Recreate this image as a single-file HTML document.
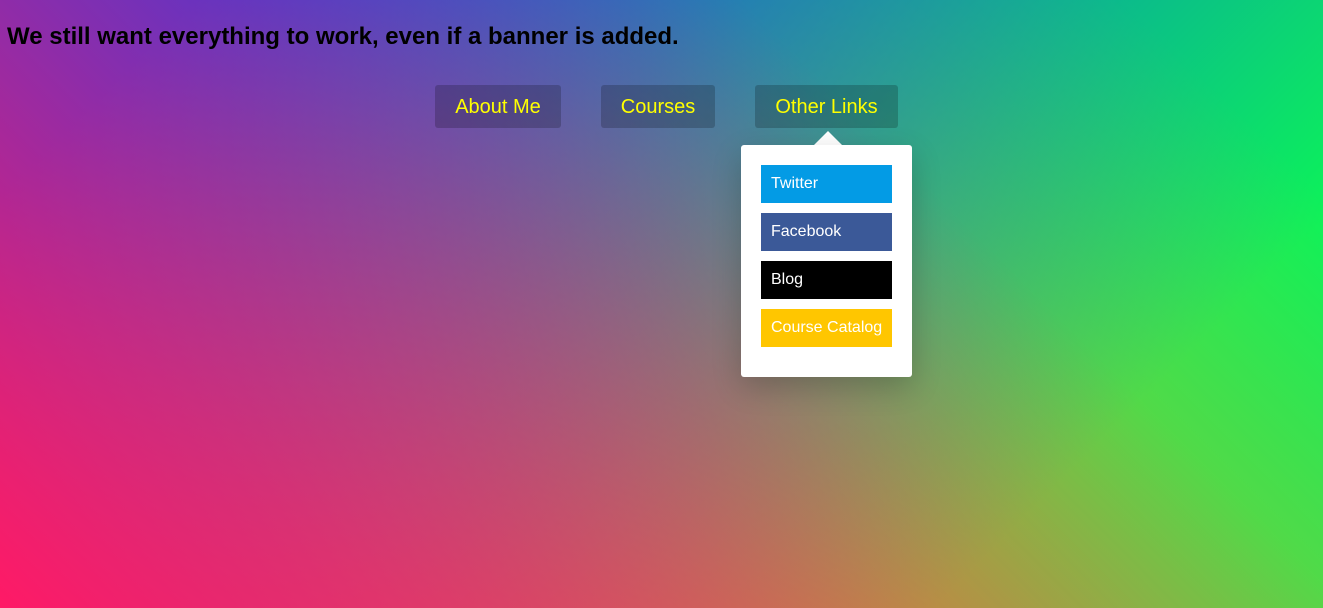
<!DOCTYPE html>
<html><head><style>
html,body{margin:0;height:100%;}
body{width:1323px;height:608px;overflow:hidden;font-family:"Liberation Sans",sans-serif;position:relative;
background:
linear-gradient(45deg,hsla(340,100%,55%,1) 0%,hsla(340,100%,55%,0) 70%),
linear-gradient(135deg,hsla(225,95%,50%,1) 10%,hsla(225,95%,50%,0) 80%),
linear-gradient(225deg,hsla(140,90%,50%,1) 10%,hsla(140,90%,50%,0) 80%),
linear-gradient(315deg,hsla(35,95%,55%,1) 100%,hsla(35,95%,55%,0) 70%);}
h2{position:absolute;left:7px;top:23px;margin:0;font-size:24px;font-weight:bold;color:#000;}
.btn{position:absolute;top:85px;height:43px;line-height:44px;background:rgba(0,0,0,.2);color:#ff0;font-size:20px;text-align:center;border-radius:3px;}
.dd{position:absolute;left:741px;top:145px;width:171px;height:232px;background:#fff;border-radius:3px;box-shadow:0 10px 30px rgba(0,0,0,.2);}
.arrow{position:absolute;left:814px;top:131px;width:0;height:0;border:14px solid transparent;border-bottom-color:#fff;border-top:0;}
.it{position:absolute;left:20px;width:121px;height:38px;line-height:38px;padding-left:10px;color:#fff;font-size:16px;}
</style></head><body>
<h2>We still want everything to work, even if a banner is added.</h2>
<div class="btn" style="left:435px;width:126px">About Me</div>
<div class="btn" style="left:601px;width:114px">Courses</div>
<div class="btn" style="left:755px;width:143px">Other Links</div>
<div class="arrow"></div>
<div class="dd">
<div class="it" style="top:20px;background:#039be5">Twitter</div>
<div class="it" style="top:68px;background:#3b5998">Facebook</div>
<div class="it" style="top:116px;background:#000">Blog</div>
<div class="it" style="top:164px;background:#ffc600">Course Catalog</div>
</div>
</body></html>
